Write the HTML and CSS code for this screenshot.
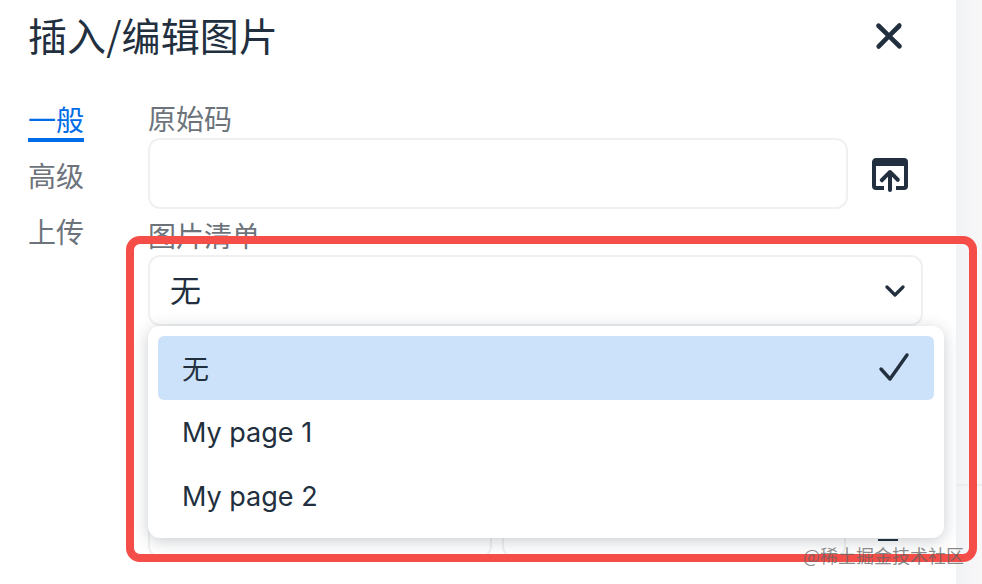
FILE: index.html
```html
<!DOCTYPE html>
<html lang="zh-CN">
<head>
  <meta charset="UTF-8">
  <meta name="viewport" content="width=device-width, initial-scale=1.0">
  <title>插入/编辑图片</title>
  <link rel="stylesheet" href="styles.css">
</head>
<body>
  <div class="dialog">
    <header class="dialog-header">
      <h1>插入/编辑图片</h1>
      <button class="close-btn">
        <svg width="56" height="56" viewBox="0 0 24 24"><path d="M17.3 8.2L13.4 12l3.9 3.8a1 1 0 0 1-1.4 1.4L12 13.4l-3.8 3.9a1 1 0 0 1-1.4-1.4l3.8-3.9-3.9-3.8a1 1 0 0 1 1.4-1.4l3.9 3.8 3.8-3.9a1 1 0 0 1 1.4 1.4z"/></svg>
      </button>
    </header>

    <div class="dialog-body">
      <nav class="tabs">
        <a class="tab active">一般</a>
        <a class="tab">高级</a>
        <a class="tab">上传</a>
      </nav>

      <div class="form">
        <label>原始码</label>
        <div class="row">
          <div class="field grow"></div>
          <button class="icon-btn">
            <svg width="48" height="48" viewBox="0 0 24 24"><path d="M19 4a2 2 0 0 1 2 2v12a2 2 0 0 1-2 2h-4v-2h4V8H5v10h4v2H5a2 2 0 0 1-2-2V6c0-1.1.9-2 2-2h14zm-8 9.4l-2.3 2.3a1 1 0 1 1-1.4-1.4l4-4a1 1 0 0 1 1.4 0l4 4a1 1 0 0 1-1.4 1.4L13 13.4V20a1 1 0 0 1-2 0v-6.6z"/></svg>
          </button>
        </div>

        <label>图片清单</label>
        <div class="select-wrap">
          <div class="select">
            <span>无</span>
            <svg width="20" height="12" viewBox="0 0 20 12"><path d="M2 2l8 8 8-8" fill="none" stroke="#222f3e" stroke-width="3.2" stroke-linecap="round" stroke-linejoin="round"/></svg>
          </div>
          <ul class="menu">
            <li class="selected">
              <span>无</span>
              <svg width="32" height="32" viewBox="0 0 32 32"><path d="M3 17l9 10L29 3" fill="none" stroke="#222f3e" stroke-width="3.4" stroke-linecap="round" stroke-linejoin="round"/></svg>
            </li>
            <li>My page 1</li>
            <li>My page 2</li>
          </ul>
        </div>

        <div class="row size-row">
          <div class="field half"></div>
          <div class="field half"></div>
          <button class="icon-btn">
            <span class="lock-top"></span>
          </button>
        </div>
      </div>
    </div>
  </div>

  <div class="highlight"></div>
  <div class="watermark">@稀土掘金技术社区</div>
</body>
</html>
```

FILE: styles.css
```css
* {
  box-sizing: border-box;
}
body {
  margin: 0;
  height: 584px;
  position: relative;
  overflow: hidden;
  font-family: Inter, "Noto Sans CJK SC", sans-serif;
  color: #222f3e;
  background:
    linear-gradient(transparent 484px, #ebecee 484px, #ebecee 486px, transparent 486px),
    linear-gradient(90deg, #f1f2f4 956px, #f8f8f9 982px);
}
.dialog {
  width: 956px;
  height: 584px;
  background: white;
  overflow: hidden;
}
.dialog-header {
  display: flex;
  justify-content: space-between;
  align-items: center;
  height: 72px;
  padding: 0 39px 0 28px;
}
.dialog-header h1 {
  margin: 0 0 4px;
  font-size: 39px;
  font-weight: 400;
  line-height: 66px;
  letter-spacing: 0.1px;
  font-family: "Noto Sans CJK SC", sans-serif;
}
.close-btn, .icon-btn {
  padding: 0;
  border: none;
  background: none;
  display: flex;
  align-items: center;
  justify-content: center;
}
.close-btn svg, .icon-btn svg {
  fill: #222f3e;
}
.dialog-body {
  display: flex;
  padding: 28px 33px 0 28px;
}
.tabs {
  width: 120px;
  flex-shrink: 0;
  display: flex;
  flex-direction: column;
  align-items: flex-start;
  gap: 14px;
}
.tab {
  height: 42px;
  line-height: 38px;
  font-size: 28px;
  color: #6d737b;
  border-bottom: 4px solid transparent;
  font-family: "Noto Sans CJK SC", sans-serif;
}
.tab.active {
  color: #006ce7;
  border-bottom-color: #006ce7;
}
.form {
  flex: 1;
  min-width: 0;
}
.form label {
  display: block;
  height: 38px;
  line-height: 36px;
  font-size: 28px;
  color: #6d737b;
  font-family: "Noto Sans CJK SC", sans-serif;
}
.row {
  display: flex;
  align-items: center;
  gap: 10px;
  margin-bottom: 8px;
}
.field {
  height: 71px;
  border: 2px solid #f0f0f0;
  border-radius: 12px;
  background: white;
}
.grow {
  flex: 1;
}
.icon-btn {
  width: 75px;
  height: 71px;
  margin-left: -10px;
  padding-left: 8px;
  flex-shrink: 0;
}
.select-wrap {
  position: relative;
}
.select {
  height: 71px;
  display: flex;
  justify-content: space-between;
  align-items: center;
  padding: 0 16px 4px 20px;
  border: 2px solid #f0f0f0;
  border-radius: 12px;
  font-size: 31px;
  font-family: "Noto Sans CJK SC", sans-serif;
}
.select svg {
  margin-top: 4px;
}
.menu {
  position: absolute;
  top: 71px;
  left: 0;
  width: 796px;
  margin: 0;
  padding: 10px;
  list-style: none;
  background: white;
  border-radius: 12px;
  box-shadow: 0 3px 16px rgba(34, 47, 62, 0.24);
  z-index: 2;
}
.menu li {
  height: 64px;
  display: flex;
  justify-content: space-between;
  align-items: center;
  padding: 0 24px;
  font-size: 27px;
}
.menu li.selected {
  background: #cce2fa;
  border-radius: 6px;
  font-family: "Noto Sans CJK SC", sans-serif;
}
.menu li.selected span {
  margin-top: -2px;
}
.size-row {
  margin-top: 161px;
  margin-bottom: 0;
}
.half {
  width: 344px;
}
.lock-top {
  width: 20px;
  height: 2px;
  margin-top: 35px;
  background: #222f3e;
}
.highlight {
  position: absolute;
  left: 126px;
  top: 236px;
  width: 851px;
  height: 326px;
  border: 8px solid #f54d47;
  border-radius: 14px;
  z-index: 3;
}
.watermark {
  position: absolute;
  left: 803px;
  top: 543px;
  font-size: 18px;
  line-height: 24px;
  white-space: nowrap;
  color: rgba(100, 100, 100, 0.75);
  font-family: "Noto Sans CJK SC", sans-serif;
  z-index: 4;
}
```
